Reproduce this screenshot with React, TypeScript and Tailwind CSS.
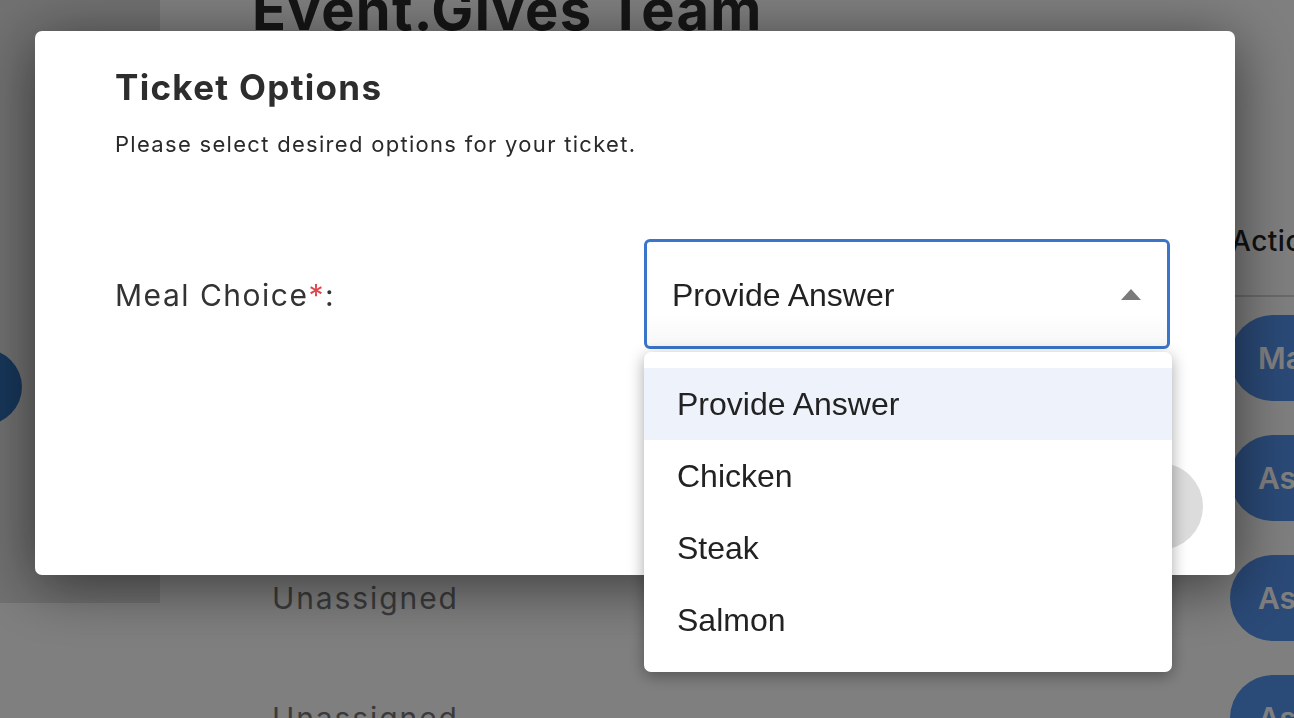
const rows = [
  { name: "", action: "Manage" },
  { name: "", action: "Assign" },
  { name: "Unassigned", action: "Assign" },
  { name: "Unassigned", action: "Assign" },
];

const options = ["Provide Answer", "Chicken", "Steak", "Salmon"];

const App = () => {
  return (
    <div className="relative w-[1294px] h-[718px] overflow-hidden bg-white font-['Inter',sans-serif]">
      {/* page behind the modal */}
      <div className="flex w-full h-full">
        <aside className="w-[160px] h-[603px] shrink-0 bg-[#e2e2e2]">
          <div className="mt-[349px] -ml-[54px] w-[76px] h-[76px] rounded-full bg-[#2f6eb5]" />
        </aside>
        <main className="flex-1 pl-[92px]">
          <h1 className="-mt-[18px] h-[56px] leading-[56px] text-[56px] font-bold tracking-[1.3px] text-[#2c2c2c] whitespace-nowrap">
            Event.Gives Team
          </h1>
          <div className="mt-[149px] w-[1200px]">
            <div className="grid grid-cols-[980px_220px] h-[110px] items-center border-b-2 border-[#d4d4d4]">
              <div />
              <div className="-ml-[1px] text-[28px] font-medium tracking-[0.5px] text-[#222]">Actions</div>
            </div>
            {rows.map((r, i) => (
              <div key={i} className="grid grid-cols-[980px_220px] h-[120px] items-center">
                <div className="pl-[20px] pt-[3px] text-[30px] tracking-[1.9px] text-[#777]">{r.name}</div>
                <div className="-ml-[2px] pt-[2px]">
                  <span className="inline-flex items-center h-[86px] px-[28px] rounded-full bg-[#5594ef] text-[30px] font-semibold text-white">
                    {r.action}
                  </span>
                </div>
              </div>
            ))}
          </div>
        </main>
      </div>

      {/* overlay */}
      <div className="fixed inset-0 bg-black/50 pl-[35px] pt-[31px]">
        <div className="w-[1200px] h-[544px] bg-white rounded-[7px] shadow-[0_10px_60px_rgba(0,0,0,0.55)] pl-[80px] pr-[65px] pt-[36px] flex flex-col">
          <h2 className="h-[40px] leading-[40px] text-[35px] font-bold text-[#2d2d2d] tracking-[1.3px]">
            Ticket Options
          </h2>
          <p className="mt-[23px] h-[28px] leading-[28px] text-[22px] tracking-[1.3px] text-[#2a2a2a]">
            Please select desired options for your ticket.
          </p>
          <div className="mt-[81px] flex items-center">
            <label className="flex-1 pt-[2px] text-[30px] tracking-[1.5px] text-[#333]">
              Meal Choice<span className="text-[#e0474c]">*</span>:
            </label>
            <div className="relative w-[526px]">
              <div className="h-[110px] flex items-center justify-between pl-[25px] pr-[26px] border-[3px] border-[#3a75c9] rounded-[6px] bg-gradient-to-b from-white from-70% to-[#f7f7f7] font-['Liberation_Sans',Arial,sans-serif] text-[32px] text-[#222]">
                <span className="pt-[2px]">Provide Answer</span>
                <svg width="20" height="11" viewBox="0 0 20 11">
                  <path d="M10 0 L20 11 L0 11 Z" fill="#7a7a7a" />
                </svg>
              </div>
              <ul className="absolute z-10 left-0 top-[calc(100%+3px)] w-[528px] py-[16px] bg-white rounded-[7px] shadow-[0_4px_16px_rgba(0,0,0,0.35)] font-['Liberation_Sans',Arial,sans-serif] text-[32px] text-[#222]">
                {options.map((o, i) => (
                  <li
                    key={o}
                    className={`h-[72px] flex items-center pl-[33px] ${i === 0 ? "bg-[#eef2fa]" : ""}`}
                  >
                    {o}
                  </li>
                ))}
              </ul>
            </div>
          </div>
          <div className="mt-[114px] flex justify-end -mr-[33px]">
            <button className="h-[87px] w-[200px] rounded-full bg-[#dcdcdc] text-[28px] text-[#555]">
              Cancel
            </button>
          </div>
        </div>
      </div>
    </div>
  );
};

export default App;
